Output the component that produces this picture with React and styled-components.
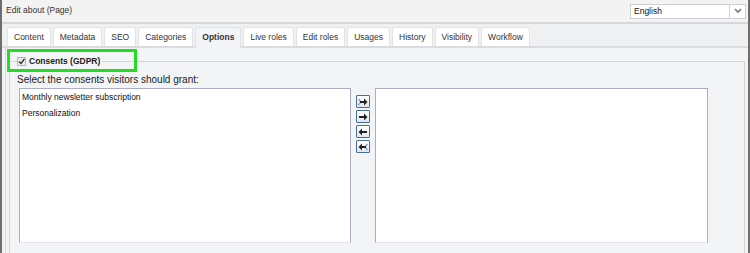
import styled, { createGlobalStyle } from "styled-components";

const GlobalStyle = createGlobalStyle`
  html, body { margin: 0; padding: 0; background: #f3f4f6; }
  body { font-family: "Liberation Sans", Arial, sans-serif; font-size: 8.5px; color: #222; }
`;

const tabs = ["Content", "Metadata", "SEO", "Categories", "Options", "Live roles", "Edit roles", "Usages", "History", "Visibility", "Workflow"];
const consents = ["Monthly newsletter subscription", "Personalization"];

const Frame = styled.div`
  position: relative;
  width: 750px;
  height: 253px;
  box-sizing: border-box;
  border-left: 2px solid #6e6e6e;
  border-right: 2px solid #6e6e6e;
  background: #f3f4f6;
  overflow: hidden;
  display: flex;
  flex-direction: column;
`;

const Header = styled.div`
  height: 22px;
  flex-shrink: 0;
  display: flex;
  align-items: center;
  justify-content: space-between;
  padding: 0 2px 0 4px;
  border-bottom: 2px solid #d6d7da;
  background: #f3f3f4;
`;

const Title = styled.div`
  color: #333;
  margin-top: -2px;
`;

const Select = styled.div`
  width: 116px;
  height: 15px;
  box-sizing: border-box;
  display: flex;
  background: #fff;
  border: 1px solid #cfd0d3;
`;

const SelectText = styled.div`
  flex: 1;
  padding-left: 3px;
  line-height: 13px;
  color: #111;
`;

const SelectArrow = styled.div`
  width: 15px;
  border-left: 1px solid #d6d7da;
  display: flex;
  align-items: center;
  justify-content: center;
`;

const TabBar = styled.div`
  display: flex;
  gap: 2px;
  padding: 3px 0 0 5px;
  height: 19px;
  flex-shrink: 0;
  border-bottom: 2px solid #dadbde;
  background: #eff0f2;
`;

const Tab = styled.div`
  padding: 0 6px;
  line-height: 18px;
  box-sizing: border-box;
  background: ${(p) => (p.$active ? "#f3f4f6" : "#fff")};
  font-weight: ${(p) => (p.$active ? "bold" : "normal")};
  border: 1px solid #e2e3e6;
  border-bottom: none;
  border-radius: 3px 3px 0 0;
  color: #333;
  margin-bottom: ${(p) => (p.$active ? "-2px" : "0")};
  height: ${(p) => (p.$active ? "21px" : "19px")};
`;

const Panel = styled.div`
  flex: 1;
  padding: 8px 3px 0 3px;
  border-left: 1px solid #d9dadd;
  border-bottom: 2px solid #d9dadd;
  margin-left: 3px;
`;

const Fieldset = styled.fieldset`
  margin: 0;
  padding: 8px 0 0 7px;
  border: 1px solid #d4d5d8;
  height: 200px;
  box-sizing: border-box;
`;

const Legend = styled.legend`
  display: flex;
  align-items: center;
  gap: 3px;
  padding: 0 2px 0 0;
  margin-left: 0;
  font-weight: bold;
  color: #222;
`;

const Check = styled.span`
  width: 9px;
  height: 9px;
  box-sizing: border-box;
  border: 1px solid #b8b8b8;
  background: #ededed;
  display: inline-flex;
  align-items: center;
  justify-content: center;
`;

const Hint = styled.div`
  font-size: 10px;
  line-height: 12px;
  margin-bottom: 2px;
  color: #1a1a1a;
`;

const Picker = styled.div`
  display: flex;
  align-items: flex-start;
  padding-left: 2px;
`;

const ListBox = styled.div`
  width: ${(p) => p.$width}px;
  height: 155px;
  box-sizing: border-box;
  background: #fff;
  border: 1px solid #abaec2;
  border-bottom-color: #e4e5ea;
  padding: 0 2px;
`;

const Item = styled.div`
  line-height: 16px;
  color: #111;
`;

const Buttons = styled.div`
  width: 24px;
  display: flex;
  flex-direction: column;
  align-items: center;
  gap: 2px;
  padding-top: 7px;
`;

const MoveButton = styled.div`
  width: 14px;
  height: 13px;
  box-sizing: border-box;
  border: 1px solid #4a6c98;
  border-radius: 1px;
  background: linear-gradient(#ffffff, #dfe6f0);
  display: flex;
  align-items: center;
  justify-content: center;
`;

const Highlight = styled.div`
  position: absolute;
  left: 5px;
  top: 49px;
  width: 130px;
  height: 23px;
  box-sizing: border-box;
  border: 3px solid #22dd22;
  pointer-events: none;
`;

const Arrow = ({ dir, all }) => (
  <svg width="10" height="8" viewBox="0 0 10 8">
    <g transform={dir === "left" ? "translate(10 0) scale(-1 1)" : undefined}>
      {all && <path d="M0.5 1 L3 4 L0.5 7" stroke="#8a96ac" strokeWidth="1.2" fill="none" />}
      <rect x={all ? 2 : 1} y="3" width={all ? 4 : 5} height="2" fill="#222" />
      <path d="M6 0.5 L9.5 4 L6 7.5 Z" fill="#222" />
    </g>
  </svg>
);

const App = () => (
  <>
    <GlobalStyle />
    <Frame>
      <Header>
        <Title>Edit about (Page)</Title>
        <Select>
          <SelectText>English</SelectText>
          <SelectArrow>
            <svg width="8" height="6" viewBox="0 0 8 6">
              <path d="M1 1 L4 4 L7 1" stroke="#777" strokeWidth="1.6" fill="none" />
            </svg>
          </SelectArrow>
        </Select>
      </Header>
      <TabBar>
        {tabs.map((t) => (
          <Tab key={t} $active={t === "Options"}>
            {t}
          </Tab>
        ))}
      </TabBar>
      <Panel>
        <Fieldset>
          <Legend>
            <Check>
              <svg width="7" height="7" viewBox="0 0 7 7">
                <path d="M1 3.5 L3 5.5 L6.5 1" stroke="#333" strokeWidth="1.4" fill="none" />
              </svg>
            </Check>
            Consents (GDPR)
          </Legend>
          <Hint>Select the consents visitors should grant:</Hint>
          <Picker>
            <ListBox $width={332}>
              {consents.map((c) => (
                <Item key={c}>{c}</Item>
              ))}
            </ListBox>
            <Buttons>
              <MoveButton><Arrow dir="right" all /></MoveButton>
              <MoveButton><Arrow dir="right" /></MoveButton>
              <MoveButton><Arrow dir="left" /></MoveButton>
              <MoveButton><Arrow dir="left" all /></MoveButton>
            </Buttons>
            <ListBox $width={333} />
          </Picker>
        </Fieldset>
      </Panel>
      <Highlight />
    </Frame>
  </>
);

export default App;
